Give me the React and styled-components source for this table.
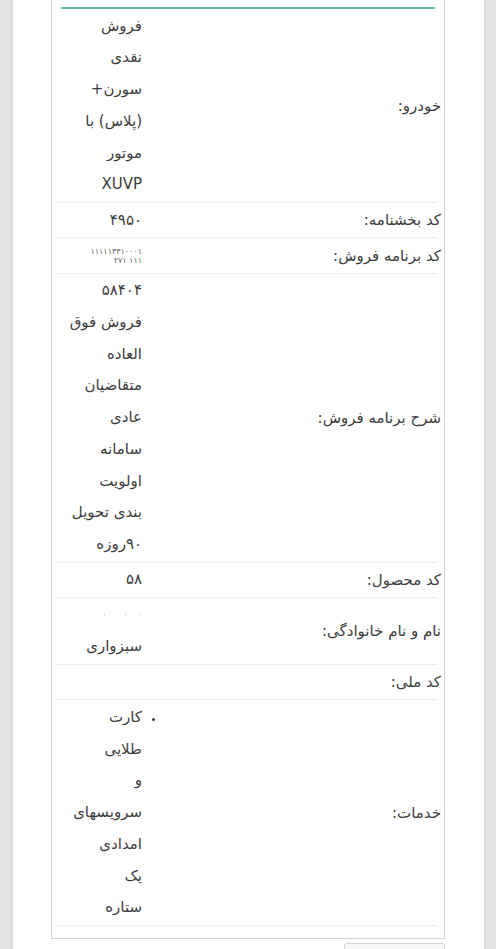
import styled, { createGlobalStyle } from 'styled-components';

const GlobalStyle = createGlobalStyle`
  html, body {
    margin: 0;
    padding: 0;
    background: #e4e4e4;
  }
  body {
    font-family: "DejaVu Sans", "Noto Sans", sans-serif;
    color: #3d3d3d;
  }
`;

const Sheet = styled.div`
  margin: 0 12px 0 13px;
  min-height: 100vh;
  background: #fff;
  box-shadow: 0 0 3px rgba(0, 0, 0, 0.12);
  padding: 0 39px 0 38px;
  box-sizing: border-box;
  overflow: hidden;
`;

const Card = styled.div`
  border: 1px solid #d2d2d2;
  border-top: none;
  padding: 0 7px 12px 4px;
  direction: rtl;
`;

const HeaderLine = styled.div`
  height: 7px;
  margin: 0 2px 0 5px;
  border-bottom: 2px solid #6fb8a0;
`;

const Row = styled.div`
  display: grid;
  grid-template-columns: 295px 1fr;
  border-bottom: 1px solid #ececec;
  padding: 1.5px 0 1px;
`;

const Label = styled.div`
  align-self: center;
  margin-right: -4px;
  font-size: 15px;
  white-space: nowrap;
`;

const Value = styled.div`
  font-size: 15px;
  line-height: 31.75px;
  text-align: right;
`;

const Line = styled.span`
  display: block;
  white-space: nowrap;
`;

const Redacted = styled.span`
  display: block;
  font-size: 8px;
  line-height: 9px;
  letter-spacing: 1px;
  color: ${p => (p.$faint ? '#9a9a9a' : '#666')};
`;

const RedactedBox = styled.div`
  height: 31.75px;
  display: flex;
  flex-direction: column;
  justify-content: center;
`;

const List = styled.ul`
  margin: 0;
  padding: 0;
  list-style: disc outside;

  li::marker {
    font-size: 11px;
  }
`;

const Footer = styled.div`
  display: flex;
  justify-content: flex-end;
  margin-top: 4px;
`;

const Button = styled.button`
  width: 101px;
  height: 34px;
  border: 1px solid #d6d6d6;
  border-radius: 3px;
  background: #f7f7f7;
`;

const rows = [
  { label: 'خودرو:', lines: ['فروش', 'نقدی', 'سورن+', '(پلاس) با', 'موتور', 'XUVP'] },
  { label: 'کد بخشنامه:', lines: ['۴۹۵۰'] },
  { label: 'کد برنامه فروش:', redacted: 'code' },
  {
    label: 'شرح برنامه فروش:',
    lines: ['۵۸۴۰۴', 'فروش فوق', 'العاده', 'متقاضیان', 'عادی', 'سامانه', 'اولویت', 'بندی تحویل', '۹۰روزه'],
  },
  { label: 'کد محصول:', lines: ['۵۸'] },
  { label: 'نام و نام خانوادگی:', redacted: 'name', lines: ['سبزواری'] },
  { label: 'کد ملی:', redacted: 'empty' },
  {
    label: 'خدمات:',
    list: ['کارت', 'طلایی', 'و', 'سرویسهای', 'امدادی', 'یک', 'ستاره'],
  },
];

const renderValue = row => {
  if (row.list) {
    return (
      <List>
        <li>
          {row.list.map((l, i) => (
            <Line key={i}>{l}</Line>
          ))}
        </li>
      </List>
    );
  }
  if (row.redacted === 'code') {
    return (
      <RedactedBox>
        <Redacted>۱۱۱۱۱۳۳۱۰۰۰۱</Redacted>
        <Redacted>۱۱۱ ۲۷۱</Redacted>
      </RedactedBox>
    );
  }
  if (row.redacted === 'empty') {
    return <RedactedBox />;
  }
  return (
    <>
      {row.redacted === 'name' && (
        <RedactedBox>
          <Redacted $faint>·&nbsp;&nbsp;&nbsp;·&nbsp;&nbsp;&nbsp;&nbsp;&nbsp;·&nbsp;&nbsp;</Redacted>
        </RedactedBox>
      )}
      {row.lines.map((l, i) => (
        <Line key={i}>{l}</Line>
      ))}
    </>
  );
};

export default function App() {
  return (
    <>
      <GlobalStyle />
      <Sheet>
        <Card>
          <HeaderLine />
          {rows.map((row, i) => (
            <Row key={i}>
              <Label>{row.label}</Label>
              <Value>{renderValue(row)}</Value>
            </Row>
          ))}
        </Card>
        <Footer>
          <Button />
        </Footer>
      </Sheet>
    </>
  );
}
